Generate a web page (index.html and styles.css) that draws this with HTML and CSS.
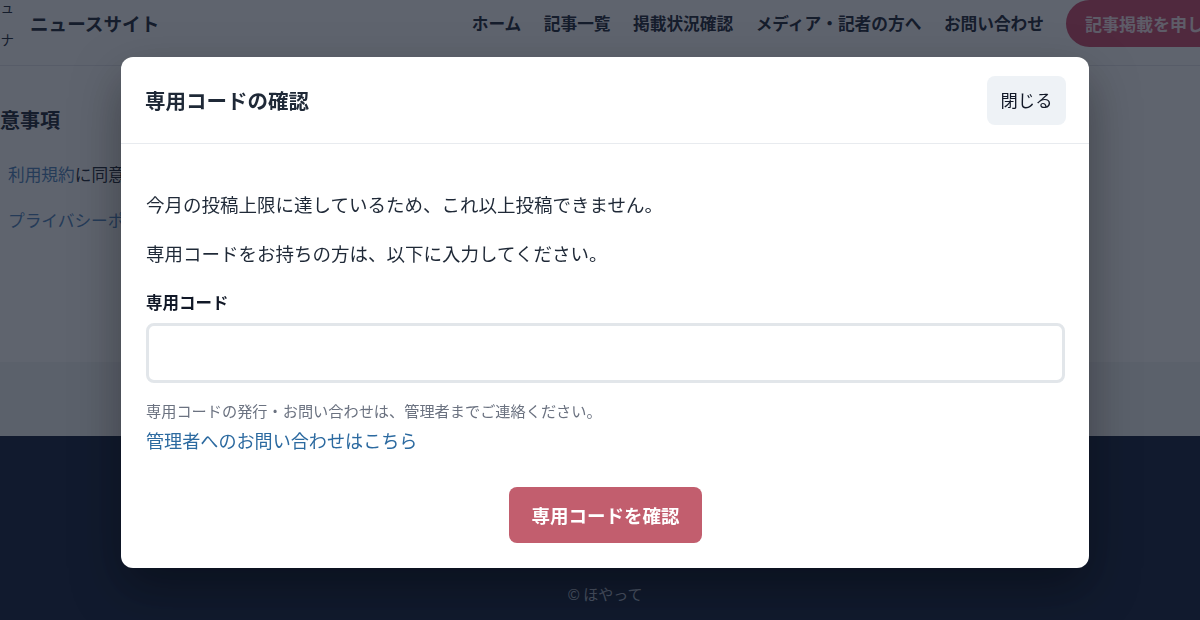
FILE: index.html
```html
<!DOCTYPE html>
<html lang="ja">
<head>
<meta charset="utf-8">
<title>専用コードの確認 | ニュースサイト</title>
<link rel="stylesheet" href="styles.css">
</head>
<body>
<div class="page">
  <header class="site-header">
    <div class="logo">ニュ<br>サナ</div>
    <a class="site-title" href="#">ニュースサイト</a>
    <nav class="nav">
      <a href="#">ホーム</a>
      <a href="#">記事一覧</a>
      <a href="#">掲載状況確認</a>
      <a href="#">メディア・記者の方へ</a>
      <a href="#">お問い合わせ</a>
    </nav>
    <a class="cta" href="#">記事掲載を申し込む</a>
  </header>
  <main class="main">
    <h2 class="notice-title">注意事項</h2>
    <ul class="notice-list">
      <li><a href="#">利用規約</a>に同意の上でご利用ください。</li>
      <li><a href="#">プライバシーポリシー</a>をご確認ください。</li>
    </ul>
  </main>
  <div class="band"></div>
</div>
<footer class="footer">© ほやって</footer>

<div class="overlay">
  <div class="modal" role="dialog" aria-labelledby="modal-title">
    <div class="modal-header">
      <h2 class="modal-title" id="modal-title">専用コードの確認</h2>
      <button class="close-btn" type="button">閉じる</button>
    </div>
    <div class="modal-body">
      <p class="msg msg-1">今月の投稿上限に達しているため、これ以上投稿できません。</p>
      <p class="msg msg-2">専用コードをお持ちの方は、以下に入力してください。</p>
      <label class="field-label" for="code">専用コード</label>
      <input class="field-input" id="code" type="text">
      <p class="help">専用コードの発行・お問い合わせは、管理者までご連絡ください。</p>
      <a class="help-link" href="#">管理者へのお問い合わせはこちら</a>
      <div class="actions">
        <button class="submit-btn" type="button">専用コードを確認</button>
      </div>
    </div>
  </div>
</div>
</body>
</html>
```

FILE: styles.css
```css
* { box-sizing: border-box; }

html, body {
  margin: 0;
  padding: 0;
  overflow: hidden;
  background: #ffffff;
  font-family: "Noto Sans CJK JP", "Noto Sans", sans-serif;
  color: #1f2937;
}

a { text-decoration: none; color: inherit; }

.page {
  width: 1297px;
  margin-left: -20px;
}

/* ---------- header ---------- */
.site-header {
  display: flex;
  align-items: center;
  height: 66px;
  padding: 0 20px 19px 7px;
  border-bottom: 1px solid #e5e7eb;
  background: #ffffff;
}

.logo {
  width: 27px;
  font-size: 13.5px;
  line-height: 32px;
  color: #1f2937;
  text-align: right;
}

.site-title {
  margin-left: 16px;
  font-size: 18.6px;
  font-weight: 700;
  color: #1f2937;
  line-height: 28px;
  white-space: nowrap;
}

.nav {
  margin-left: auto;
  display: flex;
  gap: 22.5px;
  font-size: 16.7px;
  font-weight: 600;
  line-height: 26px;
  white-space: nowrap;
}
.nav a { color: #1f2937; }

.cta {
  margin-left: 22px;
  height: 47px;
  display: flex;
  align-items: center;
  padding: 0 19px;
  border-radius: 24px;
  background: #d04d6e;
  color: #fbe7ec;
  font-size: 17px;
  font-weight: 700;
  white-space: nowrap;
}

/* ---------- main ---------- */
.main {
  height: 296px;
  padding-top: 39px;
  background: #ffffff;
}

.notice-title {
  margin: 0;
  font-size: 20px;
  line-height: 30px;
  font-weight: 700;
  color: #1f2937;
}

.notice-list {
  list-style: none;
  margin: 0;
  padding: 25px 0 0 28px;
  display: flex;
  flex-direction: column;
  gap: 18px;
  font-size: 16.7px;
  line-height: 28px;
  color: #1f2937;
}
.notice-list a { color: #4f84bd; }

.band {
  height: 74px;
  background: #f3f4f6;
}

.footer {
  height: 200px;
  padding: 146px 0 0 10px;
  background: #13203d;
  color: #bcc6da;
  text-align: center;
  font-size: 15px;
  line-height: 24px;
}

/* ---------- modal ---------- */
.overlay {
  position: fixed;
  inset: 0;
  background: rgba(17, 24, 39, 0.67);
  display: flex;
  align-items: center;
  justify-content: center;
  padding: 5px 0 0 10px;
}

.modal {
  width: 968px;
  background: #ffffff;
  border-radius: 12px;
  box-shadow: 0 20px 50px rgba(0, 0, 0, 0.35);
  overflow: hidden;
}

.modal-header {
  height: 87px;
  display: flex;
  align-items: center;
  justify-content: space-between;
  padding: 0 23px 0 24px;
  border-bottom: 1px solid #e8ebef;
}

.modal-title {
  margin: 0;
  font-size: 20.5px;
  font-weight: 700;
  line-height: 30px;
  color: #1f2937;
}

.close-btn {
  width: 79px;
  height: 49px;
  border: none;
  border-radius: 8px;
  background: #eef2f6;
  color: #111827;
  font-family: inherit;
  font-size: 17.3px;
  line-height: 26px;
  padding: 0;
}

.modal-body {
  display: flex;
  flex-direction: column;
  align-items: flex-start;
  padding: 45px 24px 25px 25px;
}

.msg {
  margin: 0;
  font-size: 18.5px;
  line-height: 30px;
  color: #1f2937;
}
.msg-2 { margin-top: 19px; }

.field-label {
  margin-top: 21px;
  font-size: 16.5px;
  font-weight: 700;
  line-height: 26px;
  color: #111827;
}

.field-input {
  margin-top: 8px;
  width: 100%;
  height: 60px;
  border: 3px solid #e2e6ea;
  border-radius: 8px;
  background: #ffffff;
  font-family: inherit;
  font-size: 18px;
  padding: 0 14px;
  outline: none;
}

.help {
  margin: 15px 0 0;
  font-size: 15.2px;
  line-height: 24px;
  color: #6b7280;
}

.help-link {
  margin-top: 4px;
  font-size: 18.1px;
  line-height: 28px;
  color: #2c6aa0;
}

.actions {
  align-self: stretch;
  display: flex;
  justify-content: center;
  margin-top: 33px;
}

.submit-btn {
  width: 193px;
  height: 56px;
  border: none;
  border-radius: 8px;
  background: #c25e6e;
  color: #ffffff;
  font-family: inherit;
  font-size: 18.5px;
  font-weight: 700;
  padding: 0;
}
```
